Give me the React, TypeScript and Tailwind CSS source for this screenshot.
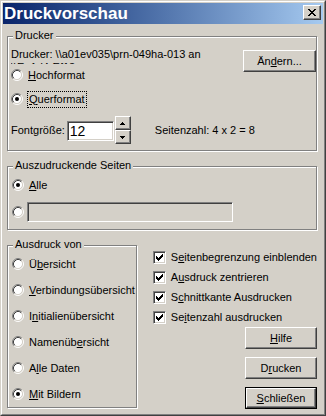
import React from "react";

// classic win2k dialog colours
// face #d4d0c8, shadow #808080, dark #404040

function Radio({ checked = false }: { checked?: boolean }) {
  return (
    <svg width="12" height="12" viewBox="0 0 12 12" className="shrink-0">
      <circle cx="6" cy="6" r="4.5" fill="#fff" />
      <path d="M2.11 9.89A5.5 5.5 0 0 1 9.89 2.11" fill="none" stroke="#808080" />
      <path d="M9.89 2.11A5.5 5.5 0 0 1 2.11 9.89" fill="none" stroke="#fff" />
      <path d="M2.82 9.18A4.5 4.5 0 0 1 9.18 2.82" fill="none" stroke="#404040" />
      <path d="M9.18 2.82A4.5 4.5 0 0 1 2.82 9.18" fill="none" stroke="#d4d0c8" />
      {checked && <circle cx="6" cy="6" r="2" fill="#000" />}
    </svg>
  );
}

function Check() {
  return (
    <div className="w-[13px] h-[13px] shrink-0 border border-t-[#808080] border-l-[#808080] border-r-white border-b-white bg-white shadow-[inset_1px_1px_0_#404040,inset_-1px_-1px_0_#d4d0c8] flex items-center justify-center">
      <svg width="7" height="7" viewBox="0 0 7 7" shapeRendering="crispEdges">
        <path
          fill="#000"
          d="M6 0h1v1h-1z M5 1h2v1h-2z M0 2h1v1h-1z M4 2h3v1h-3z M0 3h2v1h-2z M3 3h3v1h-3z M0 4h5v1h-5z M1 5h3v1h-3z M2 6h1v1h-1z"
        />
      </svg>
    </div>
  );
}

function Button({ children, isDefault = false, w = "w-[72px]" }: { children: React.ReactNode; isDefault?: boolean; w?: string }) {
  const inner = (
    <div className="flex-1 h-full flex items-center justify-center border border-t-white border-l-white border-r-[#404040] border-b-[#404040] shadow-[inset_-1px_-1px_0_#808080]">
      {children}
    </div>
  );
  if (isDefault) {
    return <div className={`${w} h-[22px] shrink-0 flex border border-black`}>{inner}</div>;
  }
  return <div className={`${w} h-[22px] shrink-0 flex`}>{inner}</div>;
}

function Group({ title, className, children }: { title: string; className: string; children: React.ReactNode }) {
  return (
    <div className={`relative border border-[#808080] shadow-[inset_1px_1px_0_#fff,1px_1px_0_#fff] ${className}`}>
      <span className="absolute -top-[8px] left-[5px] bg-[#d4d0c8] px-[2px] leading-[13px]">{title}</span>
      {children}
    </div>
  );
}

function RadioRow({ checked, children, className = "" }: { checked?: boolean; children: React.ReactNode; className?: string }) {
  return (
    <div className={`flex h-[16px] items-center ${className}`}>
      <Radio checked={checked} />
      <span className="ml-[5px] whitespace-nowrap">{children}</span>
    </div>
  );
}

function CheckRow({ children }: { children: React.ReactNode }) {
  return (
    <div className="flex h-[20px] items-center">
      <Check />
      <span className="ml-[5px] whitespace-nowrap">{children}</span>
    </div>
  );
}

export default function App() {
  return (
    <div className="w-[326px] h-[416px] bg-[#d4d0c8] border border-t-[#d4d0c8] border-l-[#d4d0c8] border-r-[#404040] border-b-[#404040] font-['Liberation_Sans',Arial,sans-serif] text-[11px] leading-[13px] text-black">
      <div className="h-full flex flex-col border border-t-white border-l-white border-r-[#808080] border-b-[#808080] p-[1px]">
        {/* Title bar */}
        <div className="h-[21px] shrink-0 flex items-start bg-gradient-to-r from-[#0a246a] to-[#a6caf0]">
          <span className="pl-[1px] self-center text-[17px] leading-[21px] font-bold text-white">Druckvorschau</span>
          <div className="ml-auto mr-[2px] mt-[2px] w-[18px] h-[15px] flex border border-t-white border-l-white border-r-[#404040] border-b-[#404040] bg-[#d4d0c8] shadow-[inset_-1px_-1px_0_#808080] items-center justify-center">
            <svg width="8" height="7" viewBox="0 0 8 7" shapeRendering="crispEdges">
              <path
                fill="#000"
                d="M0 0h2v1h-2z M6 0h2v1h-2z M1 1h2v1h-2z M5 1h2v1h-2z M2 2h4v1h-4z M3 3h2v1h-2z M2 4h4v1h-4z M1 5h2v1h-2z M5 5h2v1h-2z M0 6h2v1h-2z M6 6h2v1h-2z"
              />
            </svg>
          </div>
        </div>

        {/* Body */}
        <div className="flex-1 flex flex-col pl-[4px] pr-[6px]">
          <Group title="Drucker" className="mt-[12px] w-[310px] h-[115px] flex">
            <div className="flex-1 min-w-0 flex flex-col pl-[3px]">
              <div className="mt-[11px] h-[16px] overflow-hidden whitespace-nowrap">
                Drucker: \\a01ev035\prn-049ha-013 an
                <br />
                \\Eu1d4-Ef13
              </div>
              <RadioRow className="mt-[3px]">
                <u>H</u>ochformat
              </RadioRow>
              <div className="mt-[8px] flex h-[16px] items-center">
                <Radio checked />
                <span className="ml-[4px] px-[1px] border border-dotted border-black leading-[15px] whitespace-nowrap">
                  <u>Q</u>uerformat
                </span>
              </div>
              <div className="mt-[9px] flex h-[28px] items-center">
                <span className="shrink-0 whitespace-nowrap">Fontgröße:</span>
                <div className="shrink-0 ml-[2px] mt-[1px] w-[47px] h-[20px] flex items-center border border-t-[#808080] border-l-[#808080] border-r-white border-b-white bg-white shadow-[inset_1px_1px_0_#404040,inset_-1px_-1px_0_#d4d0c8] pl-[2px] text-[14px] leading-[16px]">
                  12
                </div>
                <div className="shrink-0 ml-[1px] flex flex-col">
                  <div className="w-[16px] h-[14px] flex items-center justify-center border border-t-white border-l-white border-r-[#404040] border-b-[#404040] shadow-[inset_-1px_-1px_0_#808080]">
                    <svg width="5" height="3" viewBox="0 0 5 3" shapeRendering="crispEdges">
                      <path fill="#000" d="M2 0h1v1h-1z M1 1h3v1h-3z M0 2h5v1h-5z" />
                    </svg>
                  </div>
                  <div className="w-[16px] h-[14px] flex items-center justify-center border border-t-white border-l-white border-r-[#404040] border-b-[#404040] shadow-[inset_-1px_-1px_0_#808080]">
                    <svg width="5" height="3" viewBox="0 0 5 3" shapeRendering="crispEdges">
                      <path fill="#000" d="M0 0h5v1h-5z M1 1h3v1h-3z M2 2h1v1h-1z" />
                    </svg>
                  </div>
                </div>
                <span className="shrink-0 ml-[24px] whitespace-nowrap">Seitenzahl: 4 x 2 = 8</span>
              </div>
            </div>
            <div className="mt-[13px] shrink-0">
              <Button w="w-[73px]">
                Än<u>d</u>ern...
              </Button>
            </div>
          </Group>

          <Group title="Auszudruckende Seiten" className="mt-[15px] w-[310px] h-[64px] flex flex-col pl-[4px]">
            <RadioRow checked className="mt-[10px]">
              <u>A</u>lle
            </RadioRow>
            <div className="mt-[9px] flex h-[20px] items-center">
              <Radio />
              <div className="ml-[3px] w-[206px] h-[20px] border border-t-[#808080] border-l-[#808080] border-r-white border-b-white bg-[#d4d0c8] shadow-[inset_1px_1px_0_#404040,inset_-1px_-1px_0_#d4d0c8]" />
            </div>
          </Group>

          <div className="mt-[15px] flex">
            <Group title="Ausdruck von" className="w-[130px] h-[163px] flex flex-col gap-[10px] pl-[4px] pt-[10px]">
              <RadioRow>
                Ü<u>b</u>ersicht
              </RadioRow>
              <RadioRow>
                <u>V</u>erbindungsübersicht
              </RadioRow>
              <RadioRow>
                I<u>n</u>itialienübersicht
              </RadioRow>
              <RadioRow>
                Namenüb<u>e</u>rsicht
              </RadioRow>
              <RadioRow>
                A<u>l</u>le Daten
              </RadioRow>
              <RadioRow checked>
                <u>M</u>it Bildern
              </RadioRow>
            </Group>

            <div className="ml-[16px] flex-1 flex flex-col pt-[2px]">
              <CheckRow>
                S<u>e</u>itenbegrenzung einblenden
              </CheckRow>
              <CheckRow>
                A<u>u</u>sdruck zentrieren
              </CheckRow>
              <CheckRow>
                S<u>c</u>hnittkante Ausdrucken
              </CheckRow>
              <CheckRow>
                Se<u>i</u>tenzahl ausdrucken
              </CheckRow>
              <div className="flex flex-col items-end gap-[8px]">
                <Button>
                  <u>H</u>ilfe
                </Button>
                <Button>
                  D<u>r</u>ucken
                </Button>
                <Button isDefault>
                  <u>S</u>chließen
                </Button>
              </div>
            </div>
          </div>
        </div>
      </div>
    </div>
  );
}
